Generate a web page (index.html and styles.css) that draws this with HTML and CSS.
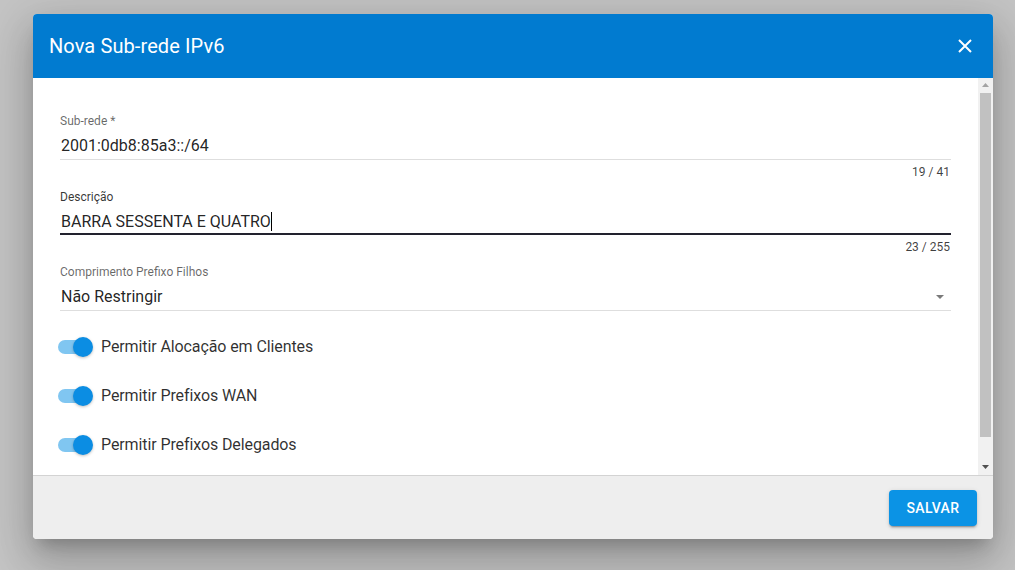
FILE: index.html
```html
<!DOCTYPE html>
<html lang="pt">
<head>
<meta charset="utf-8">
<title>Nova Sub-rede IPv6</title>
<link rel="stylesheet" href="styles.css">
</head>
<body>
<div class="overlay">
  <div class="dialog">
    <div class="dialog-header">
      <div class="dialog-title">Nova Sub-rede IPv6</div>
      <button class="close-btn" aria-label="Fechar">
        <svg width="14" height="14" viewBox="0 0 14 14"><path d="M1 1L13 13M13 1L1 13" stroke="#fff" stroke-width="2" fill="none"/></svg>
      </button>
    </div>
    <div class="dialog-body">
      <div class="body-content">
        <div class="field">
          <div class="field-label">Sub-rede *</div>
          <div class="field-input">2001:0db8:85a3::/64</div>
          <div class="field-counter">19 / 41</div>
        </div>
        <div class="field">
          <div class="field-label field-label-focus">Descrição</div>
          <div class="field-input field-input-focus">BARRA SESSENTA E QUATRO<span class="caret"></span></div>
          <div class="field-counter">23 / 255</div>
        </div>
        <div class="field">
          <div class="field-label">Comprimento Prefixo Filhos</div>
          <div class="field-input field-select">
            <span>Não Restringir</span>
            <svg class="select-arrow" width="8" height="4" viewBox="0 0 8 4"><path d="M0 0L8 0L4 4Z" fill="#7a7a7a"/></svg>
          </div>
        </div>
        <div class="switches">
          <div class="switch-row">
            <span class="switch"><span class="switch-track"></span><span class="switch-thumb"></span></span>
            <span class="switch-label">Permitir Alocação em Clientes</span>
          </div>
          <div class="switch-row">
            <span class="switch"><span class="switch-track"></span><span class="switch-thumb"></span></span>
            <span class="switch-label">Permitir Prefixos WAN</span>
          </div>
          <div class="switch-row">
            <span class="switch"><span class="switch-track"></span><span class="switch-thumb"></span></span>
            <span class="switch-label">Permitir Prefixos Delegados</span>
          </div>
        </div>
      </div>
      <div class="scrollbar">
        <svg class="sb-arrow" width="7" height="4" viewBox="0 0 7 4"><path d="M0 4L3.5 0L7 4Z" fill="#a3a3a3"/></svg>
        <div class="sb-track"><div class="sb-thumb"></div></div>
        <svg class="sb-arrow" width="7" height="4" viewBox="0 0 7 4"><path d="M0 0L7 0L3.5 4Z" fill="#505050"/></svg>
      </div>
    </div>
    <div class="dialog-footer">
      <button class="save-btn">SALVAR</button>
    </div>
  </div>
</div>
</body>
</html>
```
FILE: styles.css
```css
html, body {
  margin: 0;
  padding: 0;
  height: 100%;
}
body {
  background: #c4c4c4;
  font-family: Roboto, "Liberation Sans", Arial, sans-serif;
  overflow: hidden;
}
.overlay {
  padding: 14px 22px 0 33px;
}
.dialog {
  width: 960px;
  border-radius: 4px;
  overflow: hidden;
  background: #fff;
  box-shadow: 0 11px 15px -7px rgba(0,0,0,0.2), 0 24px 38px 3px rgba(0,0,0,0.14), 0 9px 46px 8px rgba(0,0,0,0.12);
}
.dialog-header {
  height: 64px;
  background: #017bd0;
  display: flex;
  align-items: center;
  justify-content: space-between;
  padding: 0 20px 0 16px;
}
.dialog-title {
  color: #fff;
  font-size: 20px;
  font-weight: 400;
  letter-spacing: 0.1px;
}
.close-btn {
  background: none;
  border: none;
  padding: 0;
  width: 16px;
  height: 16px;
  display: flex;
  align-items: center;
  justify-content: center;
  cursor: pointer;
}
.dialog-body {
  height: 397px;
  display: flex;
}
.body-content {
  flex: 1;
  padding: 34px 27px 0 27px;
}
.field {
  display: flex;
  flex-direction: column;
}
.field-label {
  font-size: 12px;
  line-height: 16px;
  height: 15px;
  padding-top: 1px;
  color: rgba(0,0,0,0.6);
}
.field-label-focus {
  color: rgba(0,0,0,0.8);
}
.field-input {
  height: 27px;
  padding-top: 4px;
  line-height: 28px;
  font-size: 16px;
  color: rgba(0,0,0,0.87);
  border-bottom: 1px solid #dedede;
  padding-left: 1px;
}
.field-input-focus {
  height: 25px;
  border-bottom: 2px solid #22222e;
}
.caret {
  display: inline-block;
  width: 1px;
  height: 19px;
  background: #000;
  vertical-align: -4px;
}
.field-counter {
  margin-top: 4px;
  margin-bottom: 8px;
  font-size: 12px;
  line-height: 16px;
  text-align: right;
  color: rgba(0,0,0,0.75);
  padding-right: 1px;
}
.field-select {
  display: flex;
  align-items: center;
  justify-content: space-between;
  padding-right: 7px;
}
.select-arrow {
  margin-top: 1px;
}
.switches {
  margin-top: 11px;
  display: flex;
  flex-direction: column;
}
.switch-row {
  height: 49px;
  display: flex;
  align-items: center;
}
.switch {
  position: relative;
  width: 36px;
  height: 20px;
  margin-left: -2px;
  margin-right: 7px;
}
.switch-track {
  position: absolute;
  left: 0;
  top: 3px;
  width: 34px;
  height: 14px;
  border-radius: 7px;
  background: #80c6f1;
}
.switch-thumb {
  position: absolute;
  left: 15px;
  top: 0;
  width: 20px;
  height: 20px;
  border-radius: 50%;
  background: #0b8de3;
  box-shadow: 0 1px 3px rgba(0,0,0,0.25);
}
.switch-label {
  font-size: 16px;
  letter-spacing: -0.1px;
  color: rgba(0,0,0,0.82);
}
.scrollbar {
  width: 15px;
  background: #f1f1f1;
  display: flex;
  flex-direction: column;
  align-items: center;
}
.sb-arrow {
  margin: 5px 0 6px;
  flex: none;
}
.sb-track {
  flex: 1;
  width: 100%;
  display: flex;
  flex-direction: column;
}
.sb-thumb {
  margin: 0 2px 0 2px;
  height: 344px;
  background: #c1c1c1;
}
.dialog-footer {
  height: 63px;
  background: #eeeeee;
  border-top: 1px solid #d3d3d3;
  display: flex;
  align-items: center;
  justify-content: flex-end;
  padding: 0 16px;
}
.save-btn {
  width: 88px;
  height: 36px;
  background: #0b93e5;
  color: #fff;
  border: none;
  border-radius: 4px;
  font-family: Roboto, "Liberation Sans", Arial, sans-serif;
  font-size: 14px;
  font-weight: 500;
  letter-spacing: 0.4px;
  box-shadow: 0 3px 1px -2px rgba(0,0,0,0.2), 0 2px 2px 0 rgba(0,0,0,0.14), 0 1px 5px 0 rgba(0,0,0,0.12);
}
```
